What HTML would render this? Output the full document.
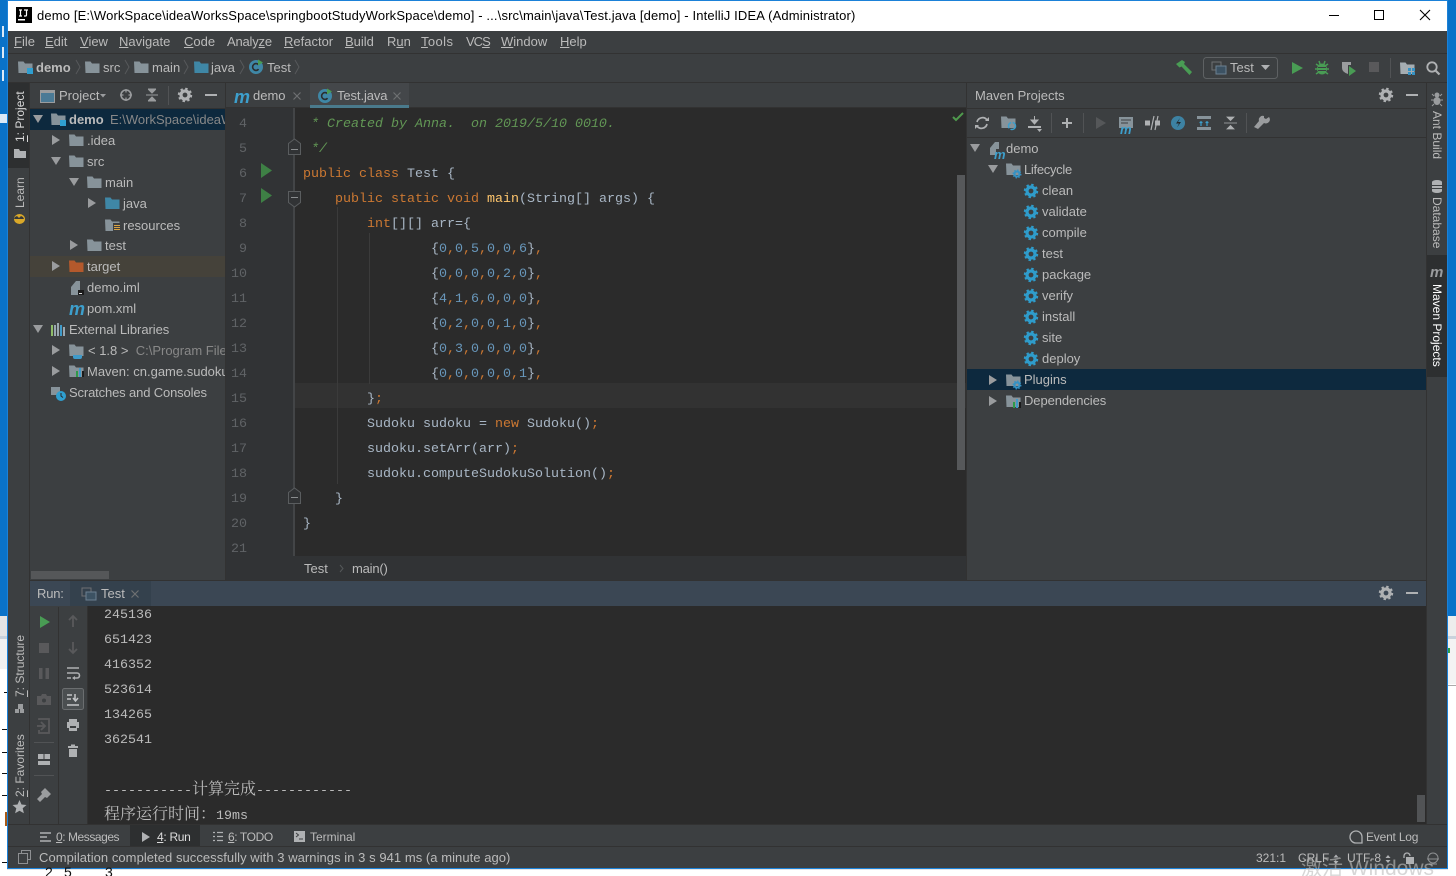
<!DOCTYPE html>
<html><head><meta charset="utf-8">
<style>
html,body{margin:0;padding:0;background:#fff;width:1456px;height:876px;overflow:hidden}
#root{position:relative;width:1456px;height:876px;overflow:hidden;font-family:"Liberation Sans","Noto Sans CJK SC",sans-serif;font-size:13px;color:#bbb}
svg.bg{position:absolute;left:0;top:0}
.w{position:absolute;left:0;width:1456px;height:0}
.t{position:absolute;white-space:pre;line-height:20px;height:20px}
.v{position:absolute;white-space:pre;writing-mode:vertical-rl;line-height:20px;width:20px;font-size:12px}
.r{transform:rotate(180deg)}
.c{position:absolute;white-space:pre;line-height:20px;height:20px;font-family:"Liberation Mono","Noto Serif CJK SC",monospace;font-size:13.33px;color:#a9b7c6}
.k{color:#cc7832}.g{color:#629755;font-style:italic}.n{color:#6897bb}.y{color:#ffc66d}
.ln{position:absolute;left:226px;width:21px;text-align:right;line-height:20px;height:20px;font-family:"Liberation Mono",monospace;font-size:13.33px;color:#606366}
.d{color:#888}
.m{position:absolute;font:italic bold 18px/18px "Liberation Sans",sans-serif;color:#3d9fcc}
</style></head><body><div id="root">
<svg class="bg" width="1456" height="876" viewBox="0 0 1456 876" xmlns="http://www.w3.org/2000/svg">
<defs>
<path id="fo" d="M-7-5.500h5.500l1.500 2h7.500v9.500h-14z"/>
<g id="gear"><circle r="4" fill="none" stroke="currentColor" stroke-width="3.200"/><circle r="6" fill="none" stroke="currentColor" stroke-width="2.400" stroke-dasharray="2.360 2.350"/></g>
<path id="ar" d="M-4-5L4 0L-4 5z" fill="#9a9c9e"/>
<path id="ad" d="M-5-4L5-4L0 4z" fill="#9a9c9e"/>
<path id="x" d="M-3.500-3.500L3.500 3.500M3.500-3.500L-3.500 3.500" stroke="#6e7072" stroke-width="1.200" fill="none"/>
<g id="cls"><circle r="7" fill="#3f87a6"/><path d="M2.600-2.200A3.400 3.400 0 1 0 2.600 2.200" fill="none" stroke="#2b2d2e" stroke-width="1.600"/><path d="M2-7.500L7-4.500L2-1.500z" fill="#499c54"/></g>
<g id="run2"><rect x="-7" y="-6" width="9" height="8" fill="none" stroke="#6e7072" stroke-width="1"/><rect x="-3" y="-2" width="10" height="8" fill="#3c5263" stroke="#6b8091" stroke-width="1"/></g>
</defs>
<!-- desktop -->
<rect width="1456" height="876" fill="#fff"/>
<rect x="0" y="0" width="8" height="616" fill="#0a72c8"/>
<rect x="1447" y="0" width="9" height="616" fill="#0a72c8"/>
<rect x="0" y="616" width="8" height="20" fill="#e4e4e4"/>
<rect x="0" y="636" width="8" height="3" fill="#c9d2dc"/>
<rect x="0" y="639" width="8" height="30" fill="#f1f1f1"/>
<rect x="1447" y="616" width="9" height="20" fill="#ededed"/>
<rect x="1447" y="636" width="9" height="3" fill="#c9d2dc"/>
<rect x="1447" y="639" width="9" height="45" fill="#f3f3f3"/>
<rect x="1447" y="685" width="9" height="1" fill="#aaa"/>
<rect x="1448" y="648" width="2" height="5" fill="#2fa04a"/>
<g fill="#111"><rect x="4" y="692" width="3" height="1"/><rect x="2" y="729" width="5" height="1"/><rect x="2" y="752" width="5" height="1"/><rect x="2" y="773" width="5" height="1"/><rect x="2" y="795" width="5" height="1"/><rect x="2" y="862" width="5" height="1"/></g>
<rect x="5" y="812" width="2" height="14" fill="#a85a16"/>
<g fill="#dbe9f7"><rect x="2" y="26" width="2" height="11"/><rect x="2" y="47" width="2" height="11"/><rect x="2" y="70" width="2" height="11"/><rect x="0" y="114" width="7" height="9"/></g>
<!-- window -->
<rect x="7" y="0" width="1441" height="869" fill="#1b81d8"/>
<rect x="8" y="1" width="1439" height="30" fill="#fff"/>
<rect x="8" y="31" width="1439" height="837" fill="#3c3f41"/>
<!-- title icon -->
<rect x="16" y="7" width="16" height="16" fill="#000"/><rect x="18" y="19" width="7" height="1.500" fill="#fff"/>
<path d="M19 10h3M20.500 10v6M19 16h3M24 10h4M26.500 10v5q0 1-1 1h-1.500" fill="none" stroke="#fff" stroke-width="1.200"/>
<path d="M1329 15.500h10" stroke="#000" stroke-width="1"/>
<rect x="1374.500" y="10.500" width="9" height="9" fill="none" stroke="#000" stroke-width="1"/>
<path d="M1420 10l10 10M1430 10l-10 10" stroke="#000" stroke-width="1.100"/>
<!-- separators -->
<rect x="8" y="53" width="1439" height="1" fill="#323232"/>
<rect x="8" y="82" width="1439" height="1" fill="#323232"/>
<!-- nav icons -->
<g fill="#87939a">
<use href="#fo" transform="translate(25,67)"/><use href="#fo" transform="translate(92,67)"/><use href="#fo" transform="translate(141,67)"/>
</g>
<rect x="27" y="68" width="6" height="6" fill="#2f9fd0"/>
<use href="#fo" transform="translate(201,67)" fill="#3f87a6"/>
<use href="#cls" transform="translate(256,67)"/>
<g fill="none" stroke="#57595b"><path d="M76 60l4 7l-4 7M125 60l4 7l-4 7M184 60l4 7l-4 7M240 60l4 7l-4 7M295 60l4 7l-4 7"/></g>
<!-- top right toolbar -->
<path d="M1176 64l6-4l3 2l-1 2l8 8l-2.500 3l-8-8.500l-2 1z" fill="#499c54"/>
<rect x="1203.500" y="57.500" width="74" height="21" rx="3" fill="none" stroke="#5e6163"/>
<use href="#run2" transform="translate(1219,68)"/>
<path d="M1261 65h9l-4.500 5z" fill="#afb1b3"/>
<path d="M1292 62l11 6l-11 6z" fill="#499c54"/>
<ellipse cx="1322" cy="69" rx="5" ry="5.500" fill="#499c54"/><path d="M1316 64l3 2M1328 64l-3 2M1315 69h14M1316 74l3-2M1328 74l-3-2M1319 61l1 3M1325 61l-1 3" stroke="#499c54" stroke-width="1.500"/><path d="M1318 67.500h8M1318 70.500h8" stroke="#3c3f41"/>
<path d="M1342 62h9v3h-3v9q-6-2-6-6z" fill="#9a9c9e"/><path d="M1349 66l7 5l-7 5z" fill="#499c54"/>
<rect x="1369" y="62" width="10" height="10" fill="#59595b"/>
<rect x="1390" y="58" width="1" height="20" fill="#515355"/>
<use href="#fo" transform="translate(1407,68)" fill="#a5adb2"/><rect x="1408" y="68" width="3" height="3" fill="#3592c4"/><rect x="1412" y="68" width="3" height="3" fill="#3592c4"/><rect x="1408" y="72" width="3" height="3" fill="#3592c4"/><rect x="1412" y="72" width="3" height="3" fill="#3592c4"/>
<circle cx="1432" cy="67" r="4.700" fill="none" stroke="#afb1b3" stroke-width="1.800"/><path d="M1435.500 70.500l4 4" stroke="#afb1b3" stroke-width="2.200"/>
<!-- left strip -->
<rect x="8" y="83" width="21" height="85" fill="#2d2f30"/>
<rect x="29" y="83" width="1" height="741" fill="#323232"/>
<path d="M14 149h5l1 2h6v7h-12z" fill="#afb1b3"/>
<ellipse cx="19.500" cy="219" rx="5.500" ry="5" fill="#d9a829"/><path d="M15 217l2-1 2 2 2-2 2 1 1 2h-10z" fill="#35383a"/>
<g fill="#9a9c9e"><rect x="18" y="704" width="5" height="5"/><rect x="15" y="709" width="4" height="4"/><rect x="20" y="709" width="4" height="4"/></g>
<path d="M19.500 800l2 4.500 5 .5-3.800 3.300 1.200 5-4.400-2.600-4.400 2.600 1.200-5-3.800-3.300 5-.5z" fill="#afb1b3"/>
<!-- project panel -->
<rect x="30" y="109" width="195" height="21" fill="#0d293e"/>
<rect x="30" y="256" width="195" height="21" fill="#45423a"/>
<rect x="30" y="108" width="195" height="1" fill="#323232"/>
<rect x="40.500" y="90.500" width="14" height="12" fill="#4a7a96" stroke="#9a9c9e"/><rect x="41" y="91" width="13" height="2" fill="#9a9c9e"/>
<path d="M100 94h6l-3 3.500z" fill="#9a9c9e"/>
<circle cx="126" cy="95" r="5" fill="none" stroke="#9a9c9e" stroke-width="1.600"/><path d="M126 89v3.500M126 97.500v3.500M120 95h3.500M128.500 95h3.500" stroke="#9a9c9e" stroke-width="1.200"/>
<path d="M146 95h12M149 90h6l-3 3zM149 100h6l-3-3z" stroke="#9a9c9e" fill="#9a9c9e" stroke-width="1"/><path d="M148 89h8M148 101h8" stroke="#9a9c9e"/>
<rect x="168" y="86" width="1" height="19" fill="#515355"/>
<use href="#gear" transform="translate(185,95)" color="#afb1b3"/>
<rect x="205" y="94" width="12" height="2" fill="#afb1b3"/>
<use href="#ad" transform="translate(38,119)"/>
<use href="#fo" transform="translate(58,119)" fill="#87939a"/><rect x="60" y="120" width="6" height="6" fill="#2f9fd0"/>
<use href="#ar" transform="translate(56,140)"/><use href="#fo" transform="translate(76,140)" fill="#87939a"/>
<use href="#ad" transform="translate(56,161)"/><use href="#fo" transform="translate(76,161)" fill="#87939a"/>
<use href="#ad" transform="translate(74,182)"/><use href="#fo" transform="translate(94,182)" fill="#87939a"/>
<use href="#ar" transform="translate(92,203)"/><use href="#fo" transform="translate(112,203)" fill="#3f87a6"/>
<use href="#fo" transform="translate(112,225)" fill="#87939a"/><rect x="113" y="223" width="8" height="9" fill="#3c3f41"/><g fill="#d9a343"><rect x="114" y="225" width="6" height="1"/><rect x="114" y="227" width="6" height="1"/><rect x="114" y="229" width="6" height="1"/></g>
<use href="#ar" transform="translate(74,245)"/><use href="#fo" transform="translate(94,245)" fill="#87939a"/>
<use href="#ar" transform="translate(56,266)"/><use href="#fo" transform="translate(76,266)" fill="#b4592c"/>
<path d="M71 287l5-6h4v14h-9z" fill="#87939a"/><rect x="78" y="290" width="6" height="5" fill="#1b1b1b"/><rect x="79" y="293" width="3" height="1" fill="#ddd"/>
<use href="#ad" transform="translate(38,329)"/>
<g><rect x="51" y="325" width="2" height="11" fill="#8fbc6a"/><rect x="54" y="325" width="2" height="11" fill="#9aa7b0"/><rect x="57" y="323" width="2" height="13" fill="#9aa7b0"/><rect x="60" y="325" width="2" height="11" fill="#3f9ac9"/><rect x="63" y="327" width="2" height="9" fill="#9aa7b0"/></g>
<use href="#ar" transform="translate(56,350)"/><use href="#fo" transform="translate(76,350)" fill="#87939a"/><path d="M73 355h9v2q0 2-2 2h-5q-2 0-2-2z" fill="#3f9ac9"/>
<use href="#ar" transform="translate(56,371)"/><use href="#fo" transform="translate(76,371)" fill="#87939a"/><rect x="76" y="371" width="2" height="6" fill="#2f9a4a"/><rect x="79" y="368" width="2" height="9" fill="#3f9ac9"/><rect x="82" y="371" width="2" height="6" fill="#1b1b1b"/>
<path d="M51 387h9v6l-4 2h-5z" fill="#87939a"/><circle cx="61" cy="396" r="5" fill="#2f9fd0"/><path d="M61 393v3l2 1.500" stroke="#23272a" fill="none"/>
<rect x="30" y="570" width="80" height="1" fill="#3c3f41"/>
<rect x="31" y="571" width="78" height="8" fill="#555759"/>
<!-- editor -->
<rect x="225" y="83" width="742" height="25" fill="#3c3f41"/>
<rect x="225" y="83" width="1" height="497" fill="#323232"/>
<rect x="226" y="108" width="69" height="448" fill="#313335"/>
<rect x="295" y="108" width="672" height="448" fill="#2b2b2b"/>
<rect x="295" y="383" width="672" height="25" fill="#323232"/>
<rect x="225" y="107" width="742" height="1" fill="#323232"/>
<rect x="310" y="83" width="99" height="22" fill="#44474a"/>
<rect x="310" y="105" width="99" height="3" fill="#4a7a8c"/>
<use href="#cls" transform="translate(325,96)"/>
<use href="#x" transform="translate(297,96)"/><use href="#x" transform="translate(397,96)"/>
<path d="M294 108v448" stroke="#555759" fill="none"/>
<path d="M337.500 207v277M369.500 233v151" stroke="#3b3b3b" fill="none"/>
<path d="M261 163l11 7.500l-11 7.500z" fill="#3e8045"/><path d="M261 188l11 7.500l-11 7.500z" fill="#3e8045"/>
<g fill="#313335" stroke="#5a5d5f"><path d="M288.500 154.500v-11l6-4.500l6 4.500v11z"/><path d="M288.500 191.500v11l6 4.500l6-4.500v-11z"/><path d="M288.500 503.500v-11l6-4.500l6 4.500v11z"/></g>
<path d="M291 149.500h7M291 197.500h7M291 497.500h7" stroke="#8a8d8f"/>
<path d="M953 117l3 3l7-7" fill="none" stroke="#4f9a4d" stroke-width="2"/>
<rect x="957" y="175" width="8" height="295" fill="#56585a"/>
<rect x="226" y="556" width="741" height="24" fill="#313335"/>
<path d="M340 565l3 3.500l-3 3.500" fill="none" stroke="#55585a"/>
<rect x="966" y="83" width="1" height="497" fill="#323232"/>
<!-- maven panel -->
<rect x="967" y="108" width="459" height="1" fill="#323232"/>
<rect x="967" y="137" width="459" height="1" fill="#323232"/>
<use href="#gear" transform="translate(1386,95)" color="#afb1b3"/><rect x="1406" y="94" width="12" height="2" fill="#afb1b3"/>
<!-- maven toolbar -->
<g fill="none" stroke="#afb1b3" stroke-width="1.700"><path d="M987 120a5.600 5.600 0 0 0-10 2M977 126a5.600 5.600 0 0 0 10-2"/></g><path d="M985 121h4v-4zM979 125h-4v4z" fill="#afb1b3"/>
<use href="#fo" transform="translate(1008,122)" fill="#87939a"/><circle cx="1012" cy="126" r="3.500" fill="none" stroke="#3d9fcc" stroke-width="1.500" stroke-dasharray="7 1.500"/>
<path d="M1034.500 116v7M1031 120l3.500 4l3.500-4z" stroke="#afb1b3" fill="#afb1b3"/><rect x="1028" y="126" width="13" height="2" fill="#afb1b3"/><path d="M1037 129h5l-2.500 3z" fill="#afb1b3"/>
<rect x="1051" y="113" width="1" height="20" fill="#515355"/>
<path d="M1067 118v10M1062 123h10" stroke="#afb1b3" stroke-width="2"/>
<rect x="1083" y="113" width="1" height="20" fill="#515355"/>
<path d="M1096 117l10 6l-10 6z" fill="#555759"/>
<rect x="1119" y="117" width="14" height="11" fill="#87939a"/><path d="M1121 120h10M1121 123h7" stroke="#3c3f41"/>
<path d="M1145 123h5M1155 123h5" stroke="#afb1b3" stroke-width="5"/><path d="M1151 130l3-14M1155 130l3-14" stroke="#afb1b3" stroke-width="1.200"/>
<circle cx="1178" cy="123" r="7" fill="#3d82a3"/><path d="M1180 118l-4 5.500h3l-2 4l4-5.500h-3z" fill="#23272a"/>
<rect x="1197" y="116" width="14" height="3" fill="#87939a"/><rect x="1197" y="127" width="14" height="3" fill="#87939a"/><path d="M1201 121v5M1207 121v5M1199.500 122.500h3M1205.500 122.500h3" stroke="#3d9fcc" stroke-width="1.200"/>
<path d="M1224 123h13M1227 117h7l-3.500 3.500zM1227 129h7l-3.500-3.500z" stroke="#afb1b3" fill="#afb1b3" stroke-width=".8"/>
<rect x="1246" y="113" width="1" height="20" fill="#515355"/>
<path d="M1258 129l6-6a4 4 0 0 0 5-6l-3 2l-2-1v-2a4 4 0 0 0-5 5l-5 6z" fill="#9a9c9e"/>
<!-- maven tree -->
<use href="#ad" transform="translate(975,148)"/>
<path d="M990 148l5-6h4v13h-9z" fill="#87939a"/><rect x="996" y="149" width="8" height="7" fill="#3c3f41"/>
<use href="#ad" transform="translate(993,169)"/>
<use href="#fo" transform="translate(1013,169)" fill="#87939a"/>
<use href="#gear" transform="translate(1017,174) scale(.620)" color="#3592c4"/>
<g color="#2f9ccb">
<use href="#gear" transform="translate(1031,191)"/><use href="#gear" transform="translate(1031,212)"/><use href="#gear" transform="translate(1031,233)"/><use href="#gear" transform="translate(1031,254)"/><use href="#gear" transform="translate(1031,275)"/><use href="#gear" transform="translate(1031,296)"/><use href="#gear" transform="translate(1031,317)"/><use href="#gear" transform="translate(1031,338)"/><use href="#gear" transform="translate(1031,359)"/>
</g>
<rect x="967" y="369" width="459" height="21" fill="#0d293e"/>
<use href="#ar" transform="translate(993,380)"/><use href="#fo" transform="translate(1013,380)" fill="#87939a"/><use href="#gear" transform="translate(1017,385) scale(.620)" color="#3592c4"/>
<use href="#ar" transform="translate(993,401)"/><use href="#fo" transform="translate(1013,401)" fill="#87939a"/><rect x="1013" y="402" width="2" height="6" fill="#2f9a4a"/><rect x="1016" y="399" width="2" height="9" fill="#3f9ac9"/><rect x="1019" y="402" width="2" height="6" fill="#1b1b1b"/>
<!-- right strip -->
<rect x="1426" y="83" width="1" height="741" fill="#323232"/>
<rect x="1427" y="255" width="20" height="122" fill="#2d2f30"/>
<ellipse cx="1437" cy="101" rx="3.500" ry="4" fill="#9a9c9e"/><circle cx="1437" cy="95" r="2.500" fill="#9a9c9e"/><path d="M1432 94l2 2M1442 94l-2 2M1431 100h3M1443 100h-3M1432 106l2-2M1442 106l-2-2" stroke="#9a9c9e"/>
<ellipse cx="1437" cy="182" rx="5" ry="2" fill="#afb1b3"/><rect x="1432" y="182" width="10" height="9" fill="#afb1b3"/><path d="M1432 185.500h10M1432 188.500h10" stroke="#3c3f41"/><ellipse cx="1437" cy="191" rx="5" ry="2" fill="#afb1b3"/>
<!-- run panel -->
<rect x="30" y="580" width="1396" height="1" fill="#323232"/>
<rect x="30" y="581" width="1396" height="25" fill="#3b4754"/>
<rect x="70" y="581" width="81" height="25" fill="#34414d"/>
<use href="#run2" transform="translate(89,594)"/>
<use href="#x" transform="translate(135,594)"/>
<use href="#gear" transform="translate(1386,593)" color="#afb1b3"/><rect x="1406" y="592" width="12" height="2" fill="#afb1b3"/>
<rect x="88" y="606" width="1338" height="218" fill="#2b2b2b"/>
<rect x="58" y="607" width="1" height="217" fill="#323232"/>
<rect x="87" y="606" width="1" height="218" fill="#323232"/>
<rect x="1417" y="795" width="8" height="27" fill="#515355"/>
<path d="M40 616l10 6l-10 6z" fill="#499c54"/>
<rect x="39" y="643" width="10" height="10" fill="#59595b"/>
<rect x="39" y="668" width="3.500" height="11" fill="#59595b"/><rect x="45.500" y="668" width="3.500" height="11" fill="#59595b"/>
<path d="M37 696h4l1-2h4l1 2h4v9h-14z" fill="#59595b"/><circle cx="44" cy="700.500" r="2" fill="#3c3f41"/>
<path d="M39 720v-1h10v14h-10v-3M37 726h7M41 722l4 4l-4 4" fill="none" stroke="#59595b" stroke-width="1.800"/>
<rect x="34" y="742" width="20" height="1" fill="#515355"/>
<rect x="38" y="754" width="5.500" height="5" fill="#afb1b3"/><rect x="44.500" y="754" width="5.500" height="5" fill="#afb1b3"/><rect x="38" y="761" width="12" height="4" fill="#afb1b3"/>
<rect x="34" y="775" width="20" height="1" fill="#515355"/>
<path d="M37 799l5-5l-1-2l4-4l6 6l-4 4l-2-1l-5 5z" fill="#9a9c9e"/>
<path d="M73 616v11M69 620l4-4l4 4" fill="none" stroke="#59595b" stroke-width="1.800"/>
<path d="M73 642v11M69 649l4 4l4-4" fill="none" stroke="#59595b" stroke-width="1.800"/>
<path d="M67 668h12M67 673h10a2.500 2.500 0 0 1 0 5h-3M67 678h4" fill="none" stroke="#afb1b3" stroke-width="1.600"/><path d="M75 676l-3 2l3 2z" fill="#afb1b3"/>
<rect x="62.500" y="688.500" width="21" height="21" rx="2" fill="#4b4f51" stroke="#6b6e70"/>
<path d="M67 695h5M67 699h4M67 705h12M75 694v6M73 698l2.500 3l2.500-3" fill="none" stroke="#c4c6c8" stroke-width="1.500"/>
<rect x="69" y="719" width="8" height="3" fill="#afb1b3"/><rect x="67" y="722" width="12" height="6" fill="#afb1b3"/><rect x="69" y="727" width="8" height="4" fill="#afb1b3"/><rect x="70" y="726" width="6" height="2" fill="#3c3f41"/>
<rect x="68" y="746" width="10" height="2" fill="#afb1b3"/><rect x="71" y="744.500" width="4" height="2" fill="#afb1b3"/><rect x="69" y="749" width="8" height="8" fill="#afb1b3"/>
<!-- bottom bars -->
<rect x="8" y="824" width="1439" height="1" fill="#323232"/>
<rect x="8" y="846" width="1439" height="1" fill="#323232"/>
<rect x="130" y="825" width="70" height="21" fill="#2d2f30"/>
<path d="M40 833h11M40 837h7M40 841h11" stroke="#afb1b3" stroke-width="1.500"/>
<path d="M142 832l8 5l-8 5z" fill="#afb1b3"/>
<path d="M213 832.500h2M213 836.500h2M213 840.500h2M217 832.500h6M217 836.500h6M217 840.500h6" stroke="#afb1b3" stroke-width="1.300"/>
<rect x="294" y="831" width="11" height="11" fill="#afb1b3"/><path d="M296 833l2.500 2l-2.500 2M299 839h4" fill="none" stroke="#3c3f41"/>
<path d="M1362 843v-6a6 6 0 1 0-6 6z" fill="none" stroke="#afb1b3" stroke-width="1.300"/>
<path d="M21.500 853.500v-3h9v9h-3M18.500 853.500h9v10h-9z" fill="#3c3f41" stroke="#8e9092"/>
<path d="M1388 855l-2.500 3h5zM1388 863l-2.500-3h5z" fill="#afb1b3"/><path d="M1333.500 857.500l2.500-3l2.500 3zM1333.500 861l2.500 3l2.500-3z" fill="#afb1b3"/>
<path d="M1404 858v-2a3 3 0 0 1 6 0" fill="none" stroke="#afb1b3" stroke-width="1.300"/><rect x="1406" y="857" width="8" height="7" fill="#afb1b3"/>
<circle cx="1433" cy="858" r="5" fill="none" stroke="#8e9092"/><path d="M1427 859h12M1429 864h8" stroke="#8e9092"/>
<rect x="7" y="868" width="1441" height="1" fill="#1b81d8"/>
<rect x="7" y="869" width="1441" height="1" fill="#e5e5e5"/>
</svg>

<!-- title -->
<div class="t" style="left:37px;top:6px;color:#000;letter-spacing:.14px">demo [E:\WorkSpace\ideaWorksSpace\springbootStudyWorkSpace\demo] - ...\src\main\java\Test.java [demo] - IntelliJ IDEA (Administrator)</div>
<!-- menu -->
<div class="t" style="left:14px;top:32px"><u>F</u>ile</div>
<div class="t" style="left:45px;top:32px"><u>E</u>dit</div>
<div class="t" style="left:80px;top:32px"><u>V</u>iew</div>
<div class="t" style="left:119px;top:32px"><u>N</u>avigate</div>
<div class="t" style="left:184px;top:32px"><u>C</u>ode</div>
<div class="t" style="left:227px;top:32px;letter-spacing:-.2px">Analy<u>z</u>e</div>
<div class="t" style="left:284px;top:32px"><u>R</u>efactor</div>
<div class="t" style="left:345px;top:32px"><u>B</u>uild</div>
<div class="t" style="left:387px;top:32px">R<u>u</u>n</div>
<div class="t" style="left:421px;top:32px;letter-spacing:.4px"><u>T</u>ools</div>
<div class="t" style="left:466px;top:32px;letter-spacing:-1px">VC<u>S</u></div>
<div class="t" style="left:501px;top:32px"><u>W</u>indow</div>
<div class="t" style="left:560px;top:32px"><u>H</u>elp</div>
<div class="w" style="top:1px">
<!-- nav -->
<div class="t" style="left:36px;top:57px;font-weight:bold">demo</div>
<div class="t" style="left:103px;top:57px">src</div>
<div class="t" style="left:152px;top:57px">main</div>
<div class="t" style="left:211px;top:57px">java</div>
<div class="t" style="left:267px;top:57px">Test</div>
<!-- project panel -->
<div class="t" style="left:59px;top:85px">Project</div>
<div class="t" style="left:69px;top:109px;font-weight:bold">demo</div>
<div style="position:absolute;left:110px;top:109px;width:115px;height:20px;overflow:hidden;line-height:20px;white-space:pre;color:#888">E:\WorkSpace\ideaWorksSpace</div>
<div class="t" style="left:87px;top:130px">.idea</div>
<div class="t" style="left:87px;top:151px">src</div>
<div class="t" style="left:105px;top:172px">main</div>
<div class="t" style="left:123px;top:193px">java</div>
<div class="t" style="left:123px;top:215px">resources</div>
<div class="t" style="left:105px;top:235px">test</div>
<div class="t" style="left:87px;top:256px">target</div>
<div class="t" style="left:87px;top:277px">demo.iml</div>
<div class="m" style="left:69px;top:299px">m</div>
<div class="t" style="left:87px;top:298px">pom.xml</div>
<div class="t" style="left:69px;top:319px;letter-spacing:-.05px">External Libraries</div>
<div style="position:absolute;left:88px;top:340px;width:137px;height:20px;overflow:hidden;line-height:20px;white-space:pre">&lt; 1.8 &gt;  <span class="d">C:\Program Files\Java</span></div>
<div style="position:absolute;left:87px;top:361px;width:138px;height:20px;overflow:hidden;line-height:20px;white-space:pre">Maven: cn.game.sudoku:sudoku</div>
<div class="t" style="left:69px;top:382px;letter-spacing:-.14px">Scratches and Consoles</div>
<!-- tabs -->
<div class="m" style="left:234px;top:87px">m</div>
<div class="t" style="left:253px;top:85px">demo</div>
<div class="t" style="left:337px;top:85px;letter-spacing:-.1px">Test.java</div>
<!-- maven -->
<div class="t" style="left:975px;top:85px">Maven Projects</div>
<div class="t" style="left:1006px;top:138px">demo</div>
<div class="t" style="left:1024px;top:159px;letter-spacing:-.3px">Lifecycle</div>
<div class="t" style="left:1042px;top:180px">clean</div>
<div class="t" style="left:1042px;top:201px">validate</div>
<div class="t" style="left:1042px;top:222px">compile</div>
<div class="t" style="left:1042px;top:243px">test</div>
<div class="t" style="left:1042px;top:264px">package</div>
<div class="t" style="left:1042px;top:285px">verify</div>
<div class="t" style="left:1042px;top:306px">install</div>
<div class="t" style="left:1042px;top:327px">site</div>
<div class="t" style="left:1042px;top:348px">deploy</div>
<div class="t" style="left:1024px;top:369px">Plugins</div>
<div class="t" style="left:1024px;top:390px;letter-spacing:-.08px">Dependencies</div>
</div>
<div class="t" style="left:1230px;top:58px">Test</div>
<!-- left strip -->
<div class="v r" style="left:10px;top:92px;height:50px;color:#d8d8d8"><u>1</u>: Project</div>
<div class="v r" style="left:10px;top:179px;height:29px">Learn</div>
<div class="v r" style="left:10px;top:637px;height:60px"><u>7</u>: Structure</div>
<div class="v r" style="left:10px;top:737px;height:60px"><u>2</u>: Favorites</div>
<div class="w" style="top:2px">
<!-- line numbers -->
<div class="ln" style="top:113px">4</div><div class="ln" style="top:138px">5</div><div class="ln" style="top:163px">6</div><div class="ln" style="top:188px">7</div><div class="ln" style="top:213px">8</div><div class="ln" style="top:238px">9</div><div class="ln" style="top:263px">10</div><div class="ln" style="top:288px">11</div><div class="ln" style="top:313px">12</div><div class="ln" style="top:338px">13</div><div class="ln" style="top:363px">14</div><div class="ln" style="top:388px">15</div><div class="ln" style="top:413px">16</div><div class="ln" style="top:438px">17</div><div class="ln" style="top:463px">18</div><div class="ln" style="top:488px">19</div><div class="ln" style="top:513px">20</div><div class="ln" style="top:538px">21</div>
<!-- code -->
<div class="c g" style="left:311px;top:113px">* Created by Anna.  on 2019/5/10 0010.</div>
<div class="c g" style="left:311px;top:138px">*/</div>
<div class="c" style="left:303px;top:163px"><span class="k">public class</span> Test {</div>
<div class="c" style="left:335px;top:188px"><span class="k">public static void</span> <span class="y">main</span>(String[] args) {</div>
<div class="c" style="left:367px;top:213px"><span class="k">int</span>[][] arr={</div>
<div class="c" style="left:431px;top:238px">{<span class="n">0</span><span class="k">,</span><span class="n">0</span><span class="k">,</span><span class="n">5</span><span class="k">,</span><span class="n">0</span><span class="k">,</span><span class="n">0</span><span class="k">,</span><span class="n">6</span>}<span class="k">,</span></div>
<div class="c" style="left:431px;top:263px">{<span class="n">0</span><span class="k">,</span><span class="n">0</span><span class="k">,</span><span class="n">0</span><span class="k">,</span><span class="n">0</span><span class="k">,</span><span class="n">2</span><span class="k">,</span><span class="n">0</span>}<span class="k">,</span></div>
<div class="c" style="left:431px;top:288px">{<span class="n">4</span><span class="k">,</span><span class="n">1</span><span class="k">,</span><span class="n">6</span><span class="k">,</span><span class="n">0</span><span class="k">,</span><span class="n">0</span><span class="k">,</span><span class="n">0</span>}<span class="k">,</span></div>
<div class="c" style="left:431px;top:313px">{<span class="n">0</span><span class="k">,</span><span class="n">2</span><span class="k">,</span><span class="n">0</span><span class="k">,</span><span class="n">0</span><span class="k">,</span><span class="n">1</span><span class="k">,</span><span class="n">0</span>}<span class="k">,</span></div>
<div class="c" style="left:431px;top:338px">{<span class="n">0</span><span class="k">,</span><span class="n">3</span><span class="k">,</span><span class="n">0</span><span class="k">,</span><span class="n">0</span><span class="k">,</span><span class="n">0</span><span class="k">,</span><span class="n">0</span>}<span class="k">,</span></div>
<div class="c" style="left:431px;top:363px">{<span class="n">0</span><span class="k">,</span><span class="n">0</span><span class="k">,</span><span class="n">0</span><span class="k">,</span><span class="n">0</span><span class="k">,</span><span class="n">0</span><span class="k">,</span><span class="n">1</span>}<span class="k">,</span></div>
<div class="c" style="left:367px;top:388px">}<span class="k">;</span></div>
<div class="c" style="left:367px;top:413px">Sudoku sudoku = <span class="k">new</span> Sudoku()<span class="k">;</span></div>
<div class="c" style="left:367px;top:438px">sudoku.setArr(arr)<span class="k">;</span></div>
<div class="c" style="left:367px;top:463px">sudoku.computeSudokuSolution()<span class="k">;</span></div>
<div class="c" style="left:335px;top:488px">}</div>
<div class="c" style="left:303px;top:513px">}</div>
</div>
<div class="t" style="left:304px;top:559px">Test</div>
<div class="t" style="left:352px;top:559px;letter-spacing:-.2px">main()</div>
<div class="m" style="left:1120px;top:123px;font-size:13px;line-height:13px">m</div>
<div class="m" style="left:994px;top:148px;font-size:13px;line-height:13px">m</div>
<!-- right strip -->
<div class="v" style="left:1427px;top:111px;height:48px">Ant Build</div>
<div class="v" style="left:1427px;top:197px;height:49px">Database</div>
<div class="m" style="left:1430px;top:265px;font-size:15px;line-height:16px;color:#9a9c9e">m</div>
<div class="v" style="left:1427px;top:284px;height:82px;color:#fff">Maven Projects</div>
<!-- run -->
<div class="t" style="left:37px;top:584px;letter-spacing:-.2px">Run:</div>
<div class="t" style="left:101px;top:584px">Test</div>
<div class="c" style="left:104px;top:606px;color:#bbb">245136</div>
<div class="c" style="left:104px;top:631px;color:#bbb">651423</div>
<div class="c" style="left:104px;top:656px;color:#bbb">416352</div>
<div class="c" style="left:104px;top:681px;color:#bbb">523614</div>
<div class="c" style="left:104px;top:706px;color:#bbb">134265</div>
<div class="c" style="left:104px;top:731px;color:#bbb">362541</div>
<div class="c" style="left:104px;top:780px;color:#bbb">-----------<span style="font-size:16px">计算完成</span>------------</div>
<div class="c" style="left:104px;top:805px;color:#bbb"><span style="font-size:16px">程序运行时间：</span>19ms</div>
<!-- bottom -->
<div class="t" style="left:56px;top:827px;font-size:12px;letter-spacing:-.45px"><u>0</u>: Messages</div>
<div class="t" style="left:157px;top:827px;font-size:12px;color:#ddd;letter-spacing:-.3px"><u>4</u>: Run</div>
<div class="t" style="left:228px;top:827px;font-size:12px;letter-spacing:-.4px"><u>6</u>: TODO</div>
<div class="t" style="left:310px;top:827px;font-size:12px">Terminal</div>
<div class="t" style="left:1366px;top:827px;font-size:12px;letter-spacing:-.2px">Event Log</div>
<div class="t" style="left:39px;top:848px;letter-spacing:.05px">Compilation completed successfully with 3 warnings in 3 s 941 ms (a minute ago)</div>
<div class="t" style="left:1256px;top:848px;font-size:12px">321:1</div>
<div class="t" style="left:1298px;top:848px;font-size:12px">CRLF</div>
<div class="t" style="left:1347px;top:848px;font-size:12px">UTF-8</div>
<!-- desktop fragments -->
<div class="t" style="left:45px;top:862px;color:#111;font-size:14px">2</div>
<div class="t" style="left:64px;top:862px;color:#111;font-size:14px">5</div>
<div class="t" style="left:105px;top:862px;color:#111;font-size:14px">3</div>
<div class="t" style="left:1301px;top:857px;font-size:21px;line-height:24px;height:24px;color:rgba(190,190,190,.62)">激活 Windows</div>
</div></body></html>
